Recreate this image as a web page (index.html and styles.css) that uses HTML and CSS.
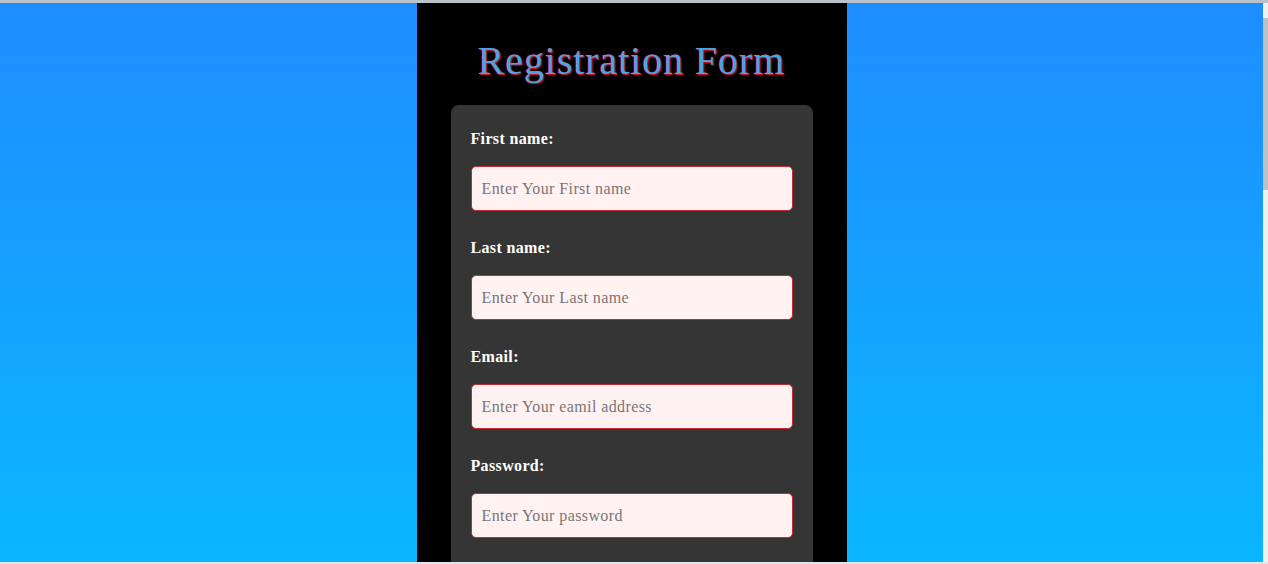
FILE: index.html
```html
<!DOCTYPE html>
<html lang="en">
<head>
<meta charset="utf-8">
<title>Registration Form</title>
<link rel="stylesheet" href="styles.css">
</head>
<body>
<div class="frame">
  <main class="page">
    <div class="container">
      <h1 class="title">Registration Form</h1>
      <form class="card">
        <div class="field">
          <label class="label" for="first">First name:</label>
          <input class="input" id="first" type="text" placeholder="Enter Your First name">
        </div>
        <div class="field">
          <label class="label" for="last">Last name:</label>
          <input class="input" id="last" type="text" placeholder="Enter Your Last name">
        </div>
        <div class="field">
          <label class="label" for="email">Email:</label>
          <input class="input" id="email" type="email" placeholder="Enter Your eamil address">
        </div>
        <div class="field">
          <label class="label" for="pass">Password:</label>
          <input class="input" id="pass" type="password" placeholder="Enter Your password">
        </div>
      </form>
    </div>
  </main>
  <div class="scrollbar"><div class="thumb"></div></div>
</div>
</body>
</html>
```

FILE: styles.css
```css
html, body {
  margin: 0;
  padding: 0;
  height: 100%;
  overflow: hidden;
}

body {
  font-family: "Liberation Serif", "DejaVu Serif", serif;
  background: #f1f1f1;
}

.frame {
  display: flex;
  height: 564px;
  box-sizing: border-box;
  border-top: 3px solid #b8c2c8;
  border-bottom: 2px solid #e4e6e8;
}

.page {
  flex: 1;
  display: flex;
  justify-content: center;
  background: linear-gradient(to bottom, #1e8dff, #0bb6ff);
  overflow: hidden;
}

.container {
  width: 430px;
  flex-shrink: 0;
  background: #000;
  padding: 0 34px;
  box-sizing: border-box;
  display: flex;
  flex-direction: column;
}

.title {
  margin: 0;
  padding-top: 34px;
  font-size: 40px;
  line-height: 48px;
  font-weight: normal;
  letter-spacing: 0.9px;
  text-align: center;
  color: #4aa3e2;
  text-shadow: 1px 1px 1px #e0102a, -0.5px 0 1px #c0102a;
}

.card {
  margin-top: 20px;
  background: #353535;
  border-radius: 8px;
  padding: 24px 20px 60px;
  display: flex;
  flex-direction: column;
  gap: 27px;
  flex-shrink: 0;
}

.field {
  display: flex;
  flex-direction: column;
  gap: 17px;
}

.label {
  color: #fff;
  font-weight: bold;
  font-size: 16px;
  line-height: 20px;
  letter-spacing: 0.35px;
}

.input {
  height: 45px;
  box-sizing: border-box;
  border: 1px solid #c42b33;
  border-radius: 5px;
  background: #fff2f1;
  padding: 0 10px;
  font-family: inherit;
  font-size: 16px;
  letter-spacing: 0.4px;
  color: #333;
  outline: none;
}

.input::placeholder {
  color: #7a7576;
}

.scrollbar {
  width: 5px;
  background: #f1f1f1;
  padding-top: 15px;
}

.thumb {
  height: 172px;
  background: #c1c1c1;
}
```
